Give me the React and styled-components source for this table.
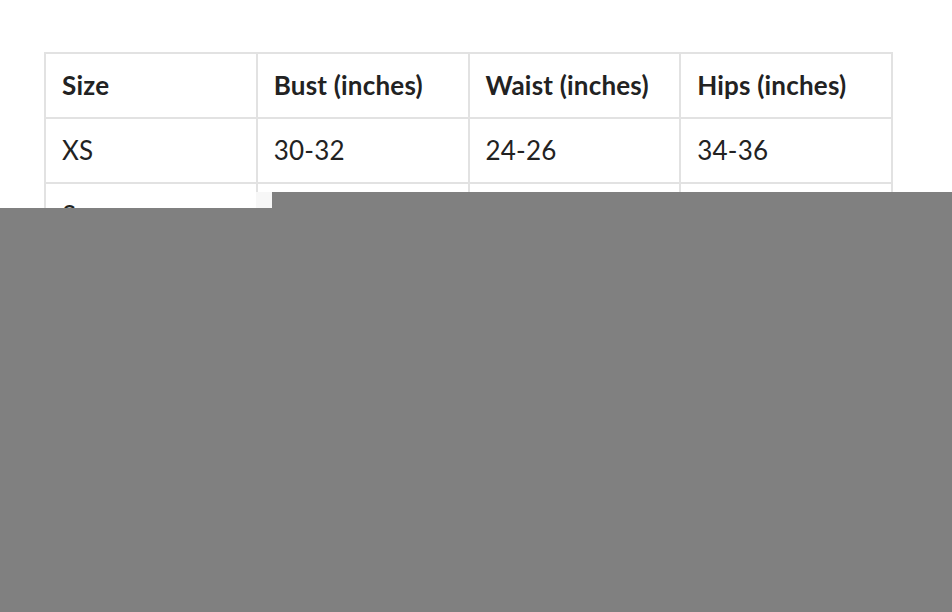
import React from "react";
import styled, { createGlobalStyle } from "styled-components";

const Global = createGlobalStyle`
  html, body { margin: 0; padding: 0; background: #fff; }
  body { font-family: Lato, "Noto Sans", sans-serif; color: #222; }
`;

const Page = styled.div`
  padding: 52px 59px 40px 44px;
`;

const Table = styled.table`
  width: 849px;
  border-collapse: collapse;
  table-layout: fixed;
  border: 2px solid #e2e2e2;
`;

const Cell = styled.td`
  border: 2px solid #e2e2e2;
  height: 65px;
  padding: 0 16px 1px;
  box-sizing: border-box;
  font-size: 26px;
  font-weight: ${(p) => (p.$head ? 700 : 400)};
  letter-spacing: 0.2px;
  text-align: left;
  vertical-align: middle;
  white-space: nowrap;
`;

const Backdrop = styled.div`
  position: fixed;
  left: 0;
  right: 0;
  top: 208px;
  bottom: 0;
  background: #808080;
`;

const Panel = styled.div`
  position: fixed;
  left: 272px;
  right: 0;
  top: 192px;
  bottom: 0;
  background: #808080;
`;

const Corner = styled.div`
  position: fixed;
  left: 256px;
  top: 192px;
  width: 16px;
  height: 16px;
  background: #f7f7f7;
`;

const rows = [
  ["Size", "Bust (inches)", "Waist (inches)", "Hips (inches)"],
  ["XS", "30-32", "24-26", "34-36"],
  ["S", "32-34", "26-28", "36-38"],
  ["M", "34-36", "28-30", "38-40"],
  ["L", "36-38", "30-32", "40-42"],
];

export default function App() {
  return (
    <>
      <Global />
      <Page>
        <Table>
          <tbody>
            {rows.map((r, i) => (
              <tr key={i}>
                {r.map((c, j) => (
                  <Cell key={j} as={i === 0 ? "th" : "td"} $head={i === 0}>
                    {c}
                  </Cell>
                ))}
              </tr>
            ))}
          </tbody>
        </Table>
      </Page>
      <Corner />
      <Backdrop />
      <Panel />
    </>
  );
}
